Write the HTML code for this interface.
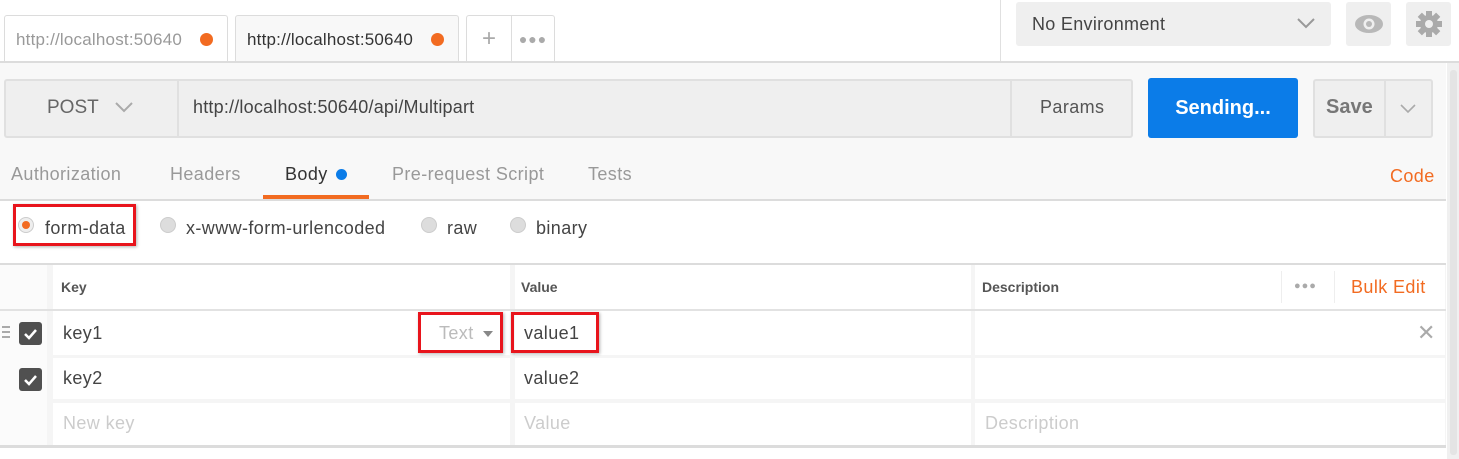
<!DOCTYPE html>
<html><head><meta charset="utf-8"><style>
*{box-sizing:border-box;margin:0;padding:0}
body{width:1459px;height:459px;overflow:hidden;background:#fff;font-family:"Liberation Sans",sans-serif;position:relative;color:#505050}
.a{position:absolute}
.tab{position:absolute;top:15px;height:47px;border:1px solid #dcdcdc;border-bottom:none;border-radius:3px 3px 0 0;background:#fff;font-size:17px;letter-spacing:.2px;line-height:48px;padding-left:11px;overflow:hidden;white-space:nowrap}
.dot{position:absolute;width:13px;height:13px;border-radius:50%;background:#f26b21;top:17px}
.c{display:flex;align-items:center;justify-content:center}
.radio{position:absolute;top:217px;width:16px;height:16px;border-radius:50%;background:#ddd;border:1px solid #ccc}
.t{position:absolute;font-size:18px;letter-spacing:.4px;white-space:nowrap}
.hd{font-size:14px;font-weight:bold;color:#555;letter-spacing:0}
.cell{position:absolute;background:#fff}
.cb{position:absolute;width:23px;height:23px;background:#505050;border-radius:3px}
</style></head><body>
<div class="tab" style="left:4px;width:224px;color:#999"><span style="display:inline-block;width:170px;overflow:hidden">http://localhost:50640</span><div class="dot" style="left:195px"></div></div>
<div class="tab" style="left:235px;width:224px;background:#f8f8f8;color:#333"><span style="display:inline-block;width:170px;overflow:hidden">http://localhost:50640</span><div class="dot" style="left:195px"></div></div>
<div class="tab" style="left:466px;width:89px;padding:0"></div>
<div class="a c" style="left:467px;top:16px;width:44px;height:45px;font-size:24px;color:#aaa">+</div>
<div class="a" style="left:511px;top:16px;width:1px;height:45px;background:#ddd"></div>
<div class="a c" style="left:512px;top:16px;width:42px;height:45px;font-size:14px;color:#aaa;letter-spacing:1px">●●●</div>
<div class="a" style="left:1000px;top:0;width:1px;height:61px;background:#e0e0e0"></div>
<div class="a" style="left:1016px;top:2px;width:315px;height:44px;background:#efefef;border-radius:3px;font-size:18px;letter-spacing:.3px;line-height:44px;padding-left:16px;color:#444">No Environment
<svg class="a" style="left:280px;top:15px" width="20" height="13"><path d="M2 2l8 8 8-8" fill="none" stroke="#999" stroke-width="2"/></svg></div>
<div class="a c" style="left:1346px;top:2px;width:45px;height:44px;background:#efefef;border-radius:3px"><svg width="30" height="20"><ellipse cx="15" cy="10" rx="14" ry="9" fill="#b8b8b8"/><circle cx="15" cy="10" r="5.5" fill="#efefef"/><circle cx="15" cy="10" r="3" fill="#b8b8b8"/></svg></div>
<div class="a c" style="left:1406px;top:2px;width:45px;height:44px;background:#efefef;border-radius:3px"><svg width="28" height="28" viewBox="0 0 28 28"><g fill="#aaa" transform="translate(14 14)"><rect x="-3" y="-13" width="6" height="26"/><rect x="-3" y="-13" width="6" height="26" transform="rotate(45)"/><rect x="-3" y="-13" width="6" height="26" transform="rotate(90)"/><rect x="-3" y="-13" width="6" height="26" transform="rotate(135)"/><circle r="9"/></g><circle cx="14" cy="14" r="4" fill="#efefef"/></svg></div>
<div class="a" style="left:0;top:61px;width:1459px;height:2px;background:#dcdcdc"></div>
<div class="a" style="left:0;top:63px;width:1446px;height:137px;background:#f8f8f8"></div>
<div class="a" style="left:1447px;top:63px;width:12px;height:396px;background:#f0f0f0"></div>
<div class="a" style="left:1450px;top:70px;width:7px;height:385px;background:#e4e4e4;border-radius:3px"></div>
<div class="a" style="left:4px;top:79px;width:1129px;height:59px;background:#efefef;border:2px solid #e0e0e0;border-radius:3px"></div>
<div class="a" style="left:177px;top:80px;width:2px;height:57px;background:#e0e0e0"></div>
<div class="a" style="left:1010px;top:80px;width:2px;height:57px;background:#e0e0e0"></div>
<div class="t" style="left:47px;top:97px;font-size:19px;color:#666;letter-spacing:0">POST</div>
<svg class="a" style="left:114px;top:101px" width="20" height="13"><path d="M2 2l8 8 8-8" fill="none" stroke="#aaa" stroke-width="2"/></svg>
<div class="t" style="left:193px;top:97px;color:#444;letter-spacing:.2px">http://localhost:50640/api/Multipart</div>
<div class="t" style="left:1040px;top:97px;color:#555">Params</div>
<div class="a c" style="left:1148px;top:78px;width:150px;height:60px;background:#0b7ce8;border-radius:3px;color:#fff;font-size:20px;font-weight:bold">Sending...</div>
<div class="a" style="left:1313px;top:79px;width:120px;height:59px;border:2px solid #e0e0e0;border-radius:3px;background:#efefef"></div>
<div class="a" style="left:1384px;top:80px;width:2px;height:57px;background:#e0e0e0"></div>
<div class="t" style="left:1326px;top:96px;font-size:20px;color:#777;font-weight:bold;letter-spacing:0">Save</div>
<svg class="a" style="left:1399px;top:103px" width="18" height="11"><path d="M2 2l7 7 7-7" fill="none" stroke="#aaa" stroke-width="1.6"/></svg>
<div class="t" style="left:11px;top:164px;color:#999">Authorization</div>
<div class="t" style="left:170px;top:164px;color:#999">Headers</div>
<div class="t" style="left:285px;top:164px;color:#333">Body</div>
<div class="a" style="left:336px;top:169px;width:11px;height:11px;border-radius:50%;background:#0b7ce8"></div>
<div class="a" style="left:263px;top:195px;width:106px;height:4px;background:#f26b21"></div>
<div class="t" style="left:392px;top:164px;color:#999">Pre-request Script</div>
<div class="t" style="left:588px;top:164px;color:#999">Tests</div>
<div class="t" style="left:1390px;top:166px;color:#f26b21">Code</div>
<div class="a" style="left:0;top:199px;width:1446px;height:2px;background:#dcdcdc"></div>
<div class="radio" style="left:18px;background:#eee"><div class="a" style="left:3px;top:3px;width:8px;height:8px;border-radius:50%;background:#f26b21"></div></div>
<div class="t" style="left:45px;top:218px;color:#444">form-data</div>
<div class="a" style="left:13px;top:204px;width:123px;height:42px;border:3px solid #e8141c;box-shadow:1px 1px 3px rgba(0,0,0,.3)"></div>
<div class="radio" style="left:160px"></div>
<div class="t" style="left:186px;top:218px;color:#444">x-www-form-urlencoded</div>
<div class="radio" style="left:421px"></div>
<div class="t" style="left:447px;top:218px;color:#444">raw</div>
<div class="radio" style="left:510px"></div>
<div class="t" style="left:536px;top:218px;color:#444">binary</div>
<div class="a" style="left:0;top:263px;width:1446px;height:185px;background:#f5f5f5"></div>
<div class="a" style="left:0;top:263px;width:1446px;height:2px;background:#dcdcdc"></div>
<div class="a" style="left:0;top:445px;width:1446px;height:3px;background:#dcdcdc"></div>
<div class="cell" style="left:0;top:265px;width:47px;height:180px;background:#fbfbfb"></div>
<div class="cell" style="left:53px;top:265px;width:457px;height:44px"></div>
<div class="cell" style="left:515px;top:265px;width:456px;height:44px"></div>
<div class="cell" style="left:975px;top:265px;width:470px;height:44px"></div>
<div class="a" style="left:0;top:309px;width:1446px;height:2px;background:#e2e2e2"></div>
<div class="t hd" style="left:61px;top:279px">Key</div>
<div class="t hd" style="left:521px;top:279px">Value</div>
<div class="t hd" style="left:982px;top:279px">Description</div>
<div class="a" style="left:1281px;top:271px;width:1px;height:32px;background:#eee"></div>
<div class="t" style="left:1294px;top:280px;font-size:11px;color:#aaa;letter-spacing:1px">●●●</div>
<div class="a" style="left:1334px;top:271px;width:1px;height:32px;background:#eee"></div>
<div class="t" style="left:1351px;top:277px;color:#f26b21">Bulk Edit</div>
<div class="cell" style="left:53px;top:311px;width:457px;height:44px"></div>
<div class="cell" style="left:515px;top:311px;width:456px;height:44px"></div>
<div class="cell" style="left:975px;top:311px;width:470px;height:44px"></div>
<div class="cell" style="left:53px;top:358px;width:457px;height:41px"></div>
<div class="cell" style="left:515px;top:358px;width:456px;height:41px"></div>
<div class="cell" style="left:975px;top:358px;width:470px;height:41px"></div>
<div class="cell" style="left:53px;top:403px;width:457px;height:42px"></div>
<div class="cell" style="left:515px;top:403px;width:456px;height:42px"></div>
<div class="cell" style="left:975px;top:403px;width:470px;height:42px"></div>
<div class="a" style="left:2px;top:326px;width:8px;height:2px;background:#aaa;box-shadow:0 5px 0 #aaa,0 10px 0 #aaa"></div>
<div class="cb" style="left:19px;top:322px"><svg width="23" height="23"><path d="M6 12l4 4 7-8" fill="none" stroke="#fff" stroke-width="2.5"/></svg></div>
<div class="cb" style="left:19px;top:368px"><svg width="23" height="23"><path d="M6 12l4 4 7-8" fill="none" stroke="#fff" stroke-width="2.5"/></svg></div>
<div class="t" style="left:63px;top:323px;color:#444">key1</div>
<div class="t" style="left:439px;top:323px;color:#bbb">Text</div>
<svg class="a" style="left:483px;top:331px" width="10" height="6"><path d="M0 0h10L5 6z" fill="#888"/></svg>
<div class="a" style="left:418px;top:312px;width:85px;height:41px;border:3px solid #e8141c;box-shadow:1px 1px 3px rgba(0,0,0,.3)"></div>
<div class="t" style="left:524px;top:323px;color:#444">value1</div>
<div class="a" style="left:511px;top:312px;width:88px;height:41px;border:3px solid #e8141c;box-shadow:1px 1px 3px rgba(0,0,0,.3)"></div>
<div class="t" style="left:1417px;top:320px;font-size:22px;color:#aaa">✕</div>
<div class="t" style="left:63px;top:368px;color:#444">key2</div>
<div class="t" style="left:524px;top:368px;color:#444">value2</div>
<div class="t" style="left:63px;top:413px;color:#ccc">New key</div>
<div class="t" style="left:524px;top:413px;color:#ccc">Value</div>
<div class="t" style="left:985px;top:413px;color:#ccc">Description</div>
</body></html>
